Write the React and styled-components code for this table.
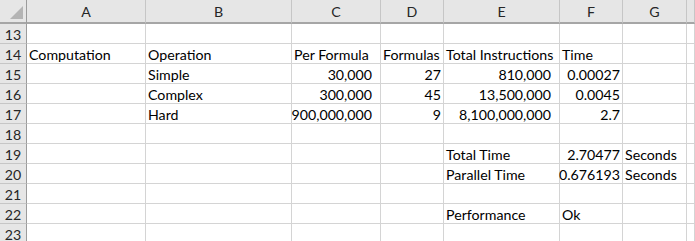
import React from 'react';
import styled, { createGlobalStyle } from 'styled-components';

const GlobalStyle = createGlobalStyle`
  html, body {
    margin: 0;
    padding: 0;
    background: #ffffff;
  }
  body {
    font-family: Lato, "Liberation Sans", sans-serif;
    overflow: hidden;
  }
`;

const columns = ['A', 'B', 'C', 'D', 'E', 'F', 'G', ''];

// text cells are plain strings, numbers are [text, format]
const rows = [
  { n: 13, cells: {} },
  { n: 14, cells: { A: 'Computation', B: 'Operation', C: 'Per Formula', D: 'Formulas', E: 'Total Instructions', F: 'Time' } },
  { n: 15, cells: { B: 'Simple', C: ['30,000', 'acct'], D: ['27', 'num'], E: ['810,000', 'acct'], F: ['0.00027', 'num'] } },
  { n: 16, cells: { B: 'Complex', C: ['300,000', 'acct'], D: ['45', 'num'], E: ['13,500,000', 'acct'], F: ['0.0045', 'num'] } },
  { n: 17, cells: { B: 'Hard', C: ['900,000,000', 'acct'], D: ['9', 'num'], E: ['8,100,000,000', 'acct'], F: ['2.7', 'num'] } },
  { n: 18, cells: {} },
  { n: 19, cells: { E: 'Total Time', F: ['2.70477', 'num'], G: 'Seconds' } },
  { n: 20, cells: { E: 'Parallel Time', F: ['0.676193', 'num'], G: 'Seconds' } },
  { n: 21, cells: {} },
  { n: 22, cells: { E: 'Performance', F: 'Ok' } },
  { n: 23, cells: {} },
];

const Sheet = styled.div`
  display: grid;
  grid-template-columns: 27px 119px 146px 89px 63px 116px 63px 64px 1fr;
  grid-template-rows: 24px;
  grid-auto-rows: 20px;
  width: 695px;
  height: 241px;
  overflow: hidden;
  font-size: 14.2px;
  color: #000;
`;

const HeaderCell = styled.div`
  box-sizing: border-box;
  background: #e6e6e6;
  border-bottom: 2px solid #a6a6a6;
  border-right: 1px solid ${p => (p.corner ? '#9b9b9b' : '#c6c6c6')};
  display: flex;
  justify-content: ${p => (p.corner ? 'flex-end' : 'center')};
  align-items: ${p => (p.corner ? 'flex-end' : 'center')};
  padding: ${p => (p.corner ? '0 3px 3px 0' : '1px 0 0 0')};
  color: #262626;
`;

const RowNumber = styled.div`
  box-sizing: border-box;
  background: #e6e6e6;
  border-right: 1px solid #9b9b9b;
  border-bottom: 1px solid #c6c6c6;
  display: flex;
  align-items: flex-end;
  justify-content: center;
  line-height: 16px;
  color: #262626;
`;

const Cell = styled.div`
  box-sizing: border-box;
  background: #fff;
  border-right: 1px solid #d4d4d4;
  border-bottom: 1px solid #d4d4d4;
  display: flex;
  align-items: flex-end;
  justify-content: ${p => (p.kind ? 'flex-end' : 'flex-start')};
  padding: 0 ${p => (p.kind === 'acct' ? '8px' : p.kind === 'num' ? '2px' : '0')} 0 2px;
  white-space: nowrap;
  line-height: 16px;
`;

const Corner = () => (
  <svg width="13" height="13" viewBox="0 0 13 13">
    <polygon points="13,0 13,13 0,13" fill="#b4b4b4" />
  </svg>
);

export default function App() {
  return (
    <>
      <GlobalStyle />
      <Sheet>
        <HeaderCell corner>
          <Corner />
        </HeaderCell>
        {columns.map((c, i) => (
          <HeaderCell key={i}>{c}</HeaderCell>
        ))}
        {rows.map(r => (
          <React.Fragment key={r.n}>
            <RowNumber>{r.n}</RowNumber>
            {columns.map((c, i) => {
              const v = r.cells[c];
              const text = Array.isArray(v) ? v[0] : v;
              const kind = Array.isArray(v) ? v[1] : null;
              return (
                <Cell key={i} kind={kind}>
                  {text}
                </Cell>
              );
            })}
          </React.Fragment>
        ))}
      </Sheet>
    </>
  );
}
